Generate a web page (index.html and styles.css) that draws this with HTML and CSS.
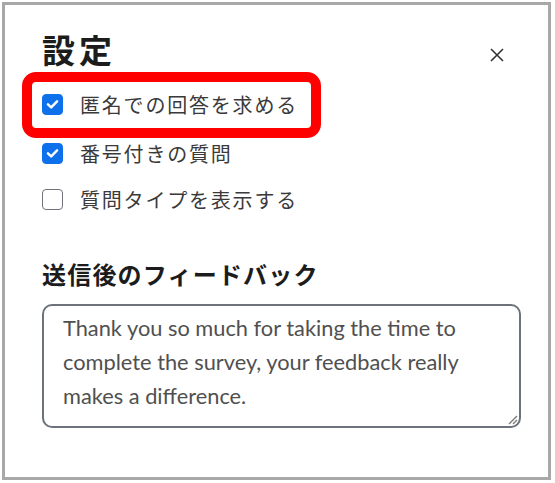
FILE: index.html
```
<!DOCTYPE html>
<html lang="ja">
<head>
    <meta charset="UTF-8">
    <meta name="viewport" content="width=device-width, initial-scale=1.0">
    <title>設定</title>
    <link rel="stylesheet" href="styles.css">
</head>
<body>
  <div class="panel">
    <div class="header">
      <h1 class="title">設定</h1>
      <button class="close" aria-label="閉じる">
        <svg width="14" height="14" viewBox="0 0 14 14"><path d="M1 1L13 13M13 1L1 13" stroke="#333" stroke-width="1.6" fill="none"/></svg>
      </button>
    </div>

    <div class="options">
      <label class="option">
        <span class="box checked">
          <svg width="20" height="20" viewBox="0 0 20 20"><path d="M5.2 10.4L8.6 13.6L14.8 7.2" stroke="#fff" stroke-width="2.6" fill="none" stroke-linecap="round" stroke-linejoin="round"/></svg>
        </span>
        匿名での回答を求める
      </label>
      <label class="option">
        <span class="box checked">
          <svg width="20" height="20" viewBox="0 0 20 20"><path d="M5.2 10.4L8.6 13.6L14.8 7.2" stroke="#fff" stroke-width="2.6" fill="none" stroke-linecap="round" stroke-linejoin="round"/></svg>
        </span>
        番号付きの質問
      </label>
      <label class="option">
        <span class="box"></span>
        質問タイプを表示する
      </label>
    </div>

    <h2 class="subtitle">送信後のフィードバック</h2>
    <div class="feedback">
      Thank you so much for taking the time to complete the survey, your feedback really makes a difference.
      <svg class="grip" width="12" height="12" viewBox="0 0 12 12"><path d="M11 3L3 11M11 7L7 11" stroke="#777" stroke-width="1.3" fill="none"/></svg>
    </div>

    <!-- annotation drawn over the first option -->
    <div class="highlight"></div>
  </div>
</body>
</html>
```

FILE: styles.css
```
:root {
    --panel-border: #a8a8a8;
    --text-color: #3a3a3a;
    --title-color: #1c1c1c;
    --blue: #0e71eb;
    --highlight: #ff0000;
}

body {
    margin: 0;
    background: #fff;
    font-family: "Noto Sans CJK JP", "Noto Sans", sans-serif;
    color: var(--text-color);
}

.panel {
    position: relative;
    box-sizing: border-box;
    width: 549px;
    height: 478px;
    margin: 2px 0 0 2px;
    border: 3px solid var(--panel-border);
    padding: 24px 0 0 37px;
}

.header {
    display: flex;
    justify-content: space-between;
    align-items: flex-start;
    padding-right: 44px;
}

.title {
    margin: 0;
    font-size: 33px;
    line-height: 40px;
    font-weight: 700;
    letter-spacing: 4px;
    color: var(--title-color);
}

.close {
    margin-top: 19px;
    padding: 0;
    border: none;
    background: none;
    width: 14px;
    height: 14px;
    display: flex;
}

.options {
    margin-top: 12px;
}

.option {
    display: flex;
    align-items: center;
    gap: 17px;
    height: 46px;
    font-size: 20px;
    letter-spacing: 1.8px;
}

.option:first-child {
    margin-bottom: 3px;
}

.box {
    box-sizing: border-box;
    flex: none;
    width: 21px;
    height: 21px;
    border: 1.5px solid #70737a;
    border-radius: 4px;
    display: flex;
    align-items: center;
    justify-content: center;
}

.box.checked {
    background: var(--blue);
    border-color: var(--blue);
}

.subtitle {
    margin: 36px 0 0;
    font-size: 24px;
    line-height: 32px;
    font-weight: 700;
    letter-spacing: 1.2px;
    color: var(--title-color);
}

.feedback {
    position: relative;
    box-sizing: border-box;
    width: 479px;
    height: 124px;
    margin-top: 14px;
    border: 2px solid #6d737b;
    border-radius: 10px;
    padding: 5px 20px 0 19px;
    font-family: Lato, "Noto Sans", sans-serif;
    font-size: 21.8px;
    line-height: 34px;
    color: #505050;
}

.grip {
    position: absolute;
    right: 1px;
    bottom: 1px;
}

.highlight {
    position: absolute;
    left: 17px;
    top: 67px;
    width: 299px;
    height: 66px;
    box-sizing: border-box;
    border: 10px solid var(--highlight);
    border-radius: 14px;
}
```
